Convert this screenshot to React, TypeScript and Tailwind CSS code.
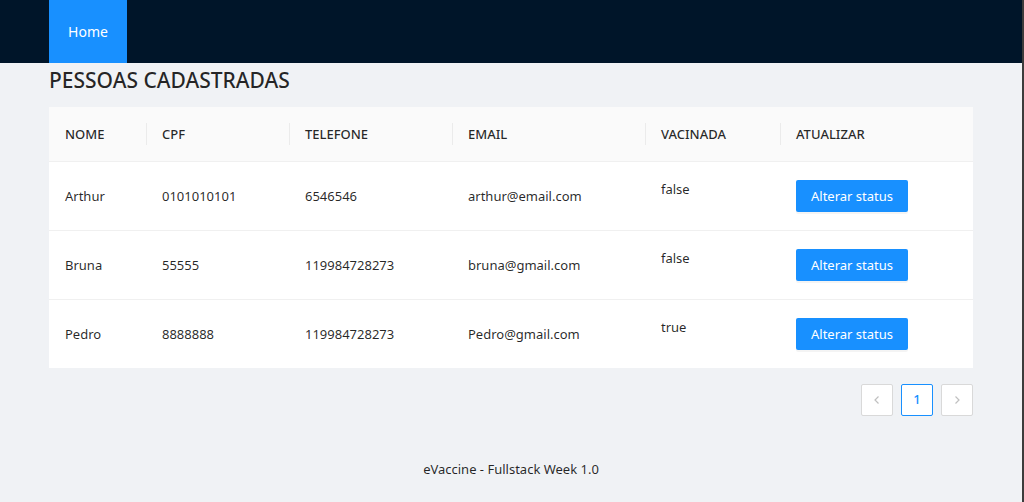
import React from "react";

const rows = [
  { nome: "Arthur", cpf: "0101010101", tel: "6546546", email: "arthur@email.com", vac: "false" },
  { nome: "Bruna", cpf: "55555", tel: "119984728273", email: "bruna@gmail.com", vac: "false" },
  { nome: "Pedro", cpf: "8888888", tel: "119984728273", email: "Pedro@gmail.com", vac: "true" },
];

const cols = [
  { label: "NOME", w: "w-[97px]" },
  { label: "CPF", w: "w-[143px]" },
  { label: "TELEFONE", w: "w-[163px]" },
  { label: "EMAIL", w: "w-[193px]" },
  { label: "VACINADA", w: "w-[135px]" },
  { label: "ATUALIZAR", w: "w-[193px]" },
];

export default function App() {
  return (
    <div
      className="min-h-[502px] w-[1024px] bg-[#f0f2f5] flex flex-col border-r-2 border-[#3c3c3c] text-[13px] text-[rgba(0,0,0,0.85)]"
      style={{ fontFamily: '"Noto Sans", "Open Sans", sans-serif' }}
    >
      <header className="h-[63px] bg-[#001529] px-[49px] flex">
        <div className="h-full w-[78px] bg-[#1890ff] text-white text-[14px] flex items-center justify-center">Home</div>
      </header>
      <main className="px-[49px] flex flex-col">
        <h2 className="text-[21px] leading-[28px] mt-[3px] mb-[13px] font-medium text-[rgba(0,0,0,0.85)]">
          PESSOAS CADASTRADAS
        </h2>
        <table className="w-[924px] bg-white border-collapse table-fixed">
          <thead>
            <tr className="bg-[#fafafa] border-b border-[#f0f0f0]">
              {cols.map((c, i) => (
                <th key={c.label} className={`${c.w} relative p-[16px] text-left font-medium leading-[22px] h-[54px]`}>
                  {c.label}
                  {i > 0 && (
                    <span className="absolute left-0 top-1/2 -translate-y-1/2 w-px h-[22px] bg-[rgba(0,0,0,0.06)]" />
                  )}
                </th>
              ))}
            </tr>
          </thead>
          <tbody>
            {rows.map((r, i) => (
              <tr key={r.nome} className={i < rows.length - 1 ? "border-b border-[#f0f0f0]" : ""}>
                <td className="p-[16px] leading-[22px] align-middle">{r.nome}</td>
                <td className="p-[16px] leading-[22px] align-middle">{r.cpf}</td>
                <td className="p-[16px] leading-[22px] align-middle">{r.tel}</td>
                <td className="p-[16px] leading-[22px] align-middle">{r.email}</td>
                <td className="p-[16px] leading-[22px] align-top">
                  <p className="mb-[14px]">{r.vac}</p>
                </td>
                <td className="p-[16px] leading-[22px] align-middle">
                  <button className="h-[32px] px-[15px] bg-[#1890ff] text-white rounded-[2px] shadow-[0_2px_0_rgba(0,0,0,0.045)]">
                    Alterar status
                  </button>
                </td>
              </tr>
            ))}
          </tbody>
        </table>
        <div className="flex justify-end gap-[8px] mt-[16px]">
          <div className="w-[32px] h-[32px] border border-[#d9d9d9] bg-white rounded-[2px] flex items-center justify-center text-[rgba(0,0,0,0.25)]">
            <svg width="12" height="12" viewBox="0 0 12 12" fill="none" stroke="currentColor" strokeWidth="1.2">
              <path d="M7.5 2.5 4 6l3.5 3.5" />
            </svg>
          </div>
          <div className="w-[32px] h-[32px] border border-[#1890ff] bg-white rounded-[2px] flex items-center justify-center text-[#1890ff] font-medium">
            1
          </div>
          <div className="w-[32px] h-[32px] border border-[#d9d9d9] bg-white rounded-[2px] flex items-center justify-center text-[rgba(0,0,0,0.25)]">
            <svg width="12" height="12" viewBox="0 0 12 12" fill="none" stroke="currentColor" strokeWidth="1.2">
              <path d="M4.5 2.5 8 6 4.5 9.5" />
            </svg>
          </div>
        </div>
      </main>
      <footer className="mt-[29px] py-[13px] text-center leading-[22px]">eVaccine - Fullstack Week 1.0</footer>
    </div>
  );
}
